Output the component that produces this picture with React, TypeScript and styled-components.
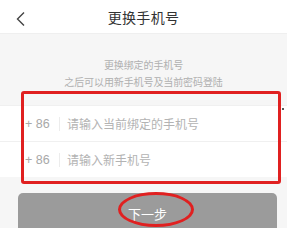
import React from 'react'
import styled, { createGlobalStyle } from 'styled-components'

const Global = createGlobalStyle`
    html, body {
        margin: 0;
        padding: 0;
        background: #f7f7f7;
        font-family: "Noto Sans CJK SC", "Liberation Sans", sans-serif;
    }
`;

const Page = styled.div`
    width: 287px;
    height: 228px;
    overflow: hidden;
    background: #f6f6f6;
`;

const Header = styled.div`
    position: relative;
    height: 34px;
    background: #fff;
    border-bottom: 1px solid #efefef;
    display: flex;
    align-items: center;
    justify-content: center;
    box-sizing: border-box;
`;

const Back = styled.div`
    position: absolute;
    left: 15px;
    top: 8px;
    width: 12px;
    height: 16px;
`;

const Title = styled.div`
    font-size: 14px;
    color: #333;
    letter-spacing: 0.3px;
`;

const Intro = styled.div`
    padding: 22px 0 15px;
    text-align: center;
    font-size: 10px;
    line-height: 17px;
    color: #b0b0b0;
    letter-spacing: -0.1px;
`;

const Form = styled.div`
    position: relative;
    background: #fff;
`;

const Row = styled.div`
    height: 36px;
    display: flex;
    align-items: center;
    border-top: 1px solid #f0f0f0;
    box-sizing: border-box;
    padding-left: 25px;
    &:last-of-type {
        border-bottom: 1px solid #f0f0f0;
    }
`;

const Code = styled.span`
    font-family: "Liberation Sans", sans-serif;
    font-size: 12.5px;
    color: #a8a8a8;
    width: 31px;
    padding-right: 3px;
    border-right: 1px solid #ececec;
    line-height: 14px;
`;

const Hint = styled.span`
    font-size: 12px;
    color: #b3b3b3;
    margin-left: 7px;
`;

const Mark = styled.div`
    position: absolute;
    left: 21px;
    top: -14px;
    width: 260px;
    height: 93px;
    border: 3px solid #e02020;
    border-radius: 3px;
    box-sizing: border-box;
    pointer-events: none;
`;

const Dot = styled.div`
    position: absolute;
    left: 282px;
    top: 3px;
    width: 2px;
    height: 2px;
    border-radius: 1px;
    background: #222;
`;

const Button = styled.div`
    position: relative;
    margin: 16px 10px 0 18px;
    height: 40px;
    border-radius: 5px;
    background: #9b9b9b;
    display: flex;
    align-items: center;
    justify-content: center;
    color: #fff;
    font-size: 13px;
    padding-top: 1px;
    box-sizing: border-box;
`;

const Ring = styled.div`
    position: absolute;
    left: 100px;
    top: -1px;
    width: 76px;
    height: 35px;
    border: 3px solid #e02020;
    border-radius: 50%;
    box-sizing: border-box;
`;

function App() {
    return (
        <Page>
            <Global />
            <Header>
                <Back>
                    <svg width="12" height="16" viewBox="0 0 12 16">
                        <path d="M9 1.5 L2.5 8 L9 14.5" fill="none" stroke="#444" strokeWidth="1.4" />
                    </svg>
                </Back>
                <Title>更换手机号</Title>
            </Header>
            <Intro>
                <div>更换绑定的手机号</div>
                <div>之后可以用新手机号及当前密码登陆</div>
            </Intro>
            <Form>
                <Row>
                    <Code>+ 86</Code>
                    <Hint>请输入当前绑定的手机号</Hint>
                </Row>
                <Row>
                    <Code>+ 86</Code>
                    <Hint>请输入新手机号</Hint>
                </Row>
                <Mark />
                <Dot />
            </Form>
            <Button>
                下一步
                <Ring />
            </Button>
        </Page>
    )
}

export default App
